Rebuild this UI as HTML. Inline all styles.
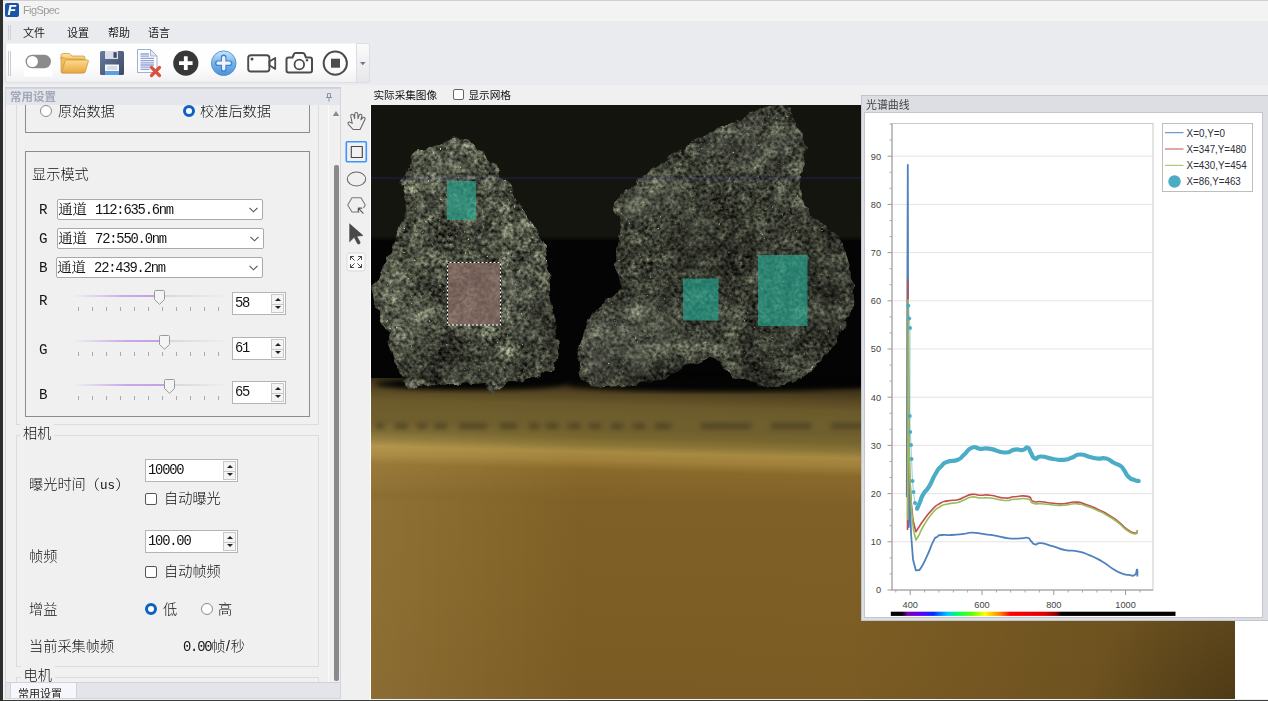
<!DOCTYPE html>
<html lang="zh-CN">
<head>
<meta charset="utf-8">
<title>FigSpec</title>
<style>
*{box-sizing:border-box;margin:0;padding:0}
html,body{width:1268px;height:701px;overflow:hidden;background:#f0f0f0}
body{position:relative;font-family:"Liberation Sans","Noto Sans CJK SC",sans-serif;font-size:11px;color:#1a1a1a}
.abs{position:absolute}
.song{font-family:"Liberation Mono","Noto Serif CJK SC",serif}
.hei{font-family:"Liberation Sans","Noto Sans CJK SC",sans-serif}
#edgeL{left:0;top:0;width:3px;height:701px;background:#2e2e2e}
#topline{left:3px;top:0;width:1265px;height:1px;background:#cfcfcf}
#titlebar{left:3px;top:1px;width:1265px;height:20px;background:#f3f3f3}
#appicon{left:5px;top:3px;width:14px;height:14px;background:#1955a6;border-radius:2px}
#apptitle{left:23px;top:3px;font-size:11px;color:#9b9b9b;line-height:14px;letter-spacing:-0.6px}
#menubar{left:3px;top:21px;width:1265px;height:64px;background:#eaebef}
.menu{top:26px;font-size:11px;line-height:14px;color:#222}
#toolbar{left:5px;top:43px;width:365px;height:40px;border-radius:3px;background:linear-gradient(#ffffff,#fdfdfd 60%,#f1f1f4);border:1px solid #dfe0e6;border-top-color:#f4f4f8}
#belowbar{left:3px;top:85px;width:1265px;height:20px;background:#f0f0f0}

#lp{left:5px;top:88px;width:336px;height:611px;background:#f0f0f0;border:1px solid #d3d5dd;overflow:hidden}
#lph{left:0;top:0;width:334px;height:16px;background:#e5e6eb}
#lpt{left:4px;top:1px;font-size:11.5px;line-height:14px;color:#a0a8b9;font-weight:bold}
.gl{border:1px solid #dcdcdc}
.gd{border:1px solid #8c8c8c}
.t14{font-size:14.2px;line-height:18px;color:#101010;white-space:nowrap;font-weight:300}
.s14{font-size:14.2px;line-height:18px;color:#141414;white-space:nowrap}
.s14 i{font-style:normal;font-size:13.800px;letter-spacing:-1.200px}
.combo{left:50.700px;width:205.500px;height:21px;background:#fff;border:1px solid #a9a9a9;border-radius:2px}
.combo .s14{left:0.500px;top:1px}
.combo svg{position:absolute;right:4px;top:7px}
.spin{background:#fff;border:1px solid #b4b4b4;height:23px}
.spin .s14{left:2px;top:1px}
.spin .btns{position:absolute;right:1px;top:1px;bottom:1px;width:13px;border:1px solid #c8c8c8;background:#f4f4f4}
.spin .btns:before{content:"";position:absolute;left:2.5px;top:3px;border:3px solid transparent;border-top:0;border-bottom:3.5px solid #222}
.spin .btns:after{content:"";position:absolute;left:2.5px;bottom:3px;border:3px solid transparent;border-bottom:0;border-top:3.5px solid #222}
.spin .btns i{position:absolute;left:0;right:0;top:9px;height:1px;background:#c8c8c8}
.radio{width:12px;height:12px;border-radius:50%;border:1px solid #8a8a8a;background:#fff}
.radio.on{border:3.5px solid #0a62c4}
.chk{width:12px;height:12px;border:1px solid #555;border-radius:2px;background:#fff}
.track{height:2px;background:linear-gradient(90deg,rgba(200,170,235,0),#c8a8ea 35%,#c3a0e8 var(--p),#d6d6d6 var(--p),rgba(217,217,217,0.1));border-radius:1px}
.ticks{height:3.500px;background:repeating-linear-gradient(90deg,#a8a8a8 0,#a8a8a8 1px,transparent 1px,transparent 14px)}
</style>
</head>
<body>
<div class="abs" id="titlebar"></div>
<div class="abs" id="topline"></div>
<div class="abs" id="menubar"></div>
<div class="abs" id="belowbar"></div>
<div class="abs" id="appicon"><span style="position:absolute;left:2.500px;top:-1px;font:italic bold 14px/16px 'Liberation Sans',sans-serif;color:#fff;letter-spacing:0">F</span></div>
<div class="abs" id="apptitle">FigSpec</div>
<div class="abs menu" style="left:23px">文件</div>
<div class="abs menu" style="left:67px">设置</div>
<div class="abs menu" style="left:108px">帮助</div>
<div class="abs menu" style="left:148px">语言</div>
<div class="abs" id="toolbar"></div>
<svg class="abs" style="left:0;top:40px" width="380" height="48" viewBox="0 40 380 48">
<defs>
<linearGradient id="gFold" x1="0" y1="0" x2="0" y2="1"><stop offset="0" stop-color="#fbdc8c"/><stop offset="1" stop-color="#eaa640"/></linearGradient>
<linearGradient id="gFoldB" x1="0" y1="0" x2="0" y2="1"><stop offset="0" stop-color="#fde79c"/><stop offset="1" stop-color="#f3c362"/></linearGradient>
<linearGradient id="gFlop" x1="0" y1="0" x2="1" y2="1"><stop offset="0" stop-color="#6a7c9c"/><stop offset="1" stop-color="#3b4964"/></linearGradient>
<linearGradient id="gBlue" x1="0" y1="0" x2="0" y2="1"><stop offset="0" stop-color="#c9e8f9"/><stop offset="0.450" stop-color="#7db9ea"/><stop offset="1" stop-color="#4a8fd9"/></linearGradient>
<linearGradient id="gOv" x1="0" y1="0" x2="0" y2="1"><stop offset="0" stop-color="#fbfbfc"/><stop offset="1" stop-color="#e6e6ea"/></linearGradient>
</defs>
<!-- toggle -->
<rect x="24" y="47" width="28.5" height="29.5" fill="#fff"/>
<rect x="25.5" y="54.8" width="25.5" height="13.4" rx="6.7" fill="#8b8b8b"/>
<circle cx="32.4" cy="61.5" r="5.5" fill="#fff"/>
<!-- folder -->
<path d="M61 55.5 q0-2 2-2 h6.5 l2.5 2.5 h11 q2 0 2 2 v2 h-24z" fill="url(#gFoldB)" stroke="#c98d3e" stroke-width="0.700"/>
<path d="M61 57 v14.5 q0 1.5 1.5 1.5 h20 l-0.5 -14 h-15 z" fill="#f1bd5c" stroke="#c98d3e" stroke-width="0.600"/>
<path d="M66.5 60 h21 q1.2 0 0.9 1.2 l-3.2 10.8 q-0.3 1 -1.4 1 h-21.3 q-1.2 0 -0.8 -1.1 l3.4 -10.9 q0.3-1 1.4-1z" fill="url(#gFold)" stroke="#c98d3e" stroke-width="0.700"/>
<!-- floppy -->
<path d="M101.5 51 h21 q1.5 0 1.5 1.5 v21 q0 1.5 -1.5 1.5 h-21 q-1.5 0 -1.5 -1.5 v-21 q0 -1.500 1.500 -1.500z" fill="url(#gFlop)"/>
<rect x="105" y="51" width="13" height="8" fill="#d9deea"/>
<rect x="113.500" y="52.200" width="3.200" height="5.600" fill="#3b4964"/>
<rect x="105" y="64.500" width="14" height="10.500" fill="#f4f6fa"/>
<rect x="105" y="71" width="14" height="4" fill="#5b9fe0"/>
<rect x="107" y="66.500" width="10" height="1" fill="#b9c2d4"/><rect x="107" y="68.500" width="10" height="1" fill="#b9c2d4"/>
<!-- doc -->
<path d="M137.5 49.500 h13 l6.500 6.500 v16.500 h-19.500z" fill="#fcfdff" stroke="#9aa6cc" stroke-width="0.9"/>
<path d="M150.500 49.500 v6.500 h6.500z" fill="#e4e9f6" stroke="#9aa6cc" stroke-width="0.8"/>
<g stroke="#93a2d2" stroke-width="1.300"><path d="M140.500 54h8.500M140.500 56.200h8.500M140.500 58.400h13.500M140.500 60.600h13.500M140.500 62.800h13.500M140.500 65h13.500M140.500 67.200h10M140.500 69.400h9"/></g>
<path d="M151.500 67.500 l8 8 M159.500 67.500 l-8 8" stroke="#d9503f" stroke-width="3.200" stroke-linecap="round"/>
<!-- black plus -->
<circle cx="185.800" cy="63.100" r="12.600" fill="#383838"/>
<path d="M185.800 56.300v13.600M179 63.100h13.600" stroke="#fff" stroke-width="3.800"/>
<!-- blue plus -->
<circle cx="223.700" cy="63.200" r="12.300" fill="url(#gBlue)" stroke="#4f8cd2" stroke-width="0.900"/>
<path d="M223.700 57.300v11.800M217.800 63.200h11.800" stroke="#3f7fcb" stroke-width="5.600" stroke-linecap="round"/>
<path d="M223.700 57.600v11.200M218.100 63.200h11.200" stroke="#eef4fd" stroke-width="3.300" stroke-linecap="round"/>
<!-- video -->
<rect x="248.200" y="55.300" width="21.200" height="16.200" rx="2.800" fill="none" stroke="#4c4c4c" stroke-width="1.900"/>
<path d="M269.400 61.500 l5.800 -3.600 v11 l-5.800 -3.600z" fill="none" stroke="#4c4c4c" stroke-width="1.800" stroke-linejoin="round"/>
<circle cx="252" cy="59" r="1.500" fill="#4c4c4c"/>
<!-- camera -->
<path d="M288.500 57.500 h4 l1.500 -3.500 q0.400 -1 1.500 -1 h7.500 q1.100 0 1.500 1 l1.500 3.500 h4 q2 0 2 2 v11 q0 2 -2 2 h-21.500 q-2 0 -2 -2 v-11 q0 -2 2 -2z" fill="none" stroke="#4c4c4c" stroke-width="2" stroke-linejoin="round"/>
<circle cx="299.300" cy="64.500" r="4.800" fill="none" stroke="#4c4c4c" stroke-width="1.800"/>
<circle cx="307" cy="60.200" r="1.200" fill="#4c4c4c"/>
<!-- stop -->
<circle cx="335.300" cy="63.200" r="11.600" fill="none" stroke="#4c4c4c" stroke-width="2"/>
<rect x="331" y="58.700" width="9" height="9" fill="#4c4c4c"/>
<!-- overflow -->
<path d="M356.500 43.500 h10.500 q2.500 0 2.500 2.500 v34 q0 2.500 -2.500 2.500 h-10.500z" fill="url(#gOv)" stroke="#dcdde3" stroke-width="1"/>
<path d="M360 62 h5.600 l-2.800 3.200z" fill="#6a7a92"/>
<!-- grips -->
<g stroke="#c9cad2" stroke-width="1"><path d="M8.500 51v25M10.500 51v25"/></g>
</svg>
<svg class="abs" style="left:3px;top:21px" width="12" height="23"><g stroke="#cfd1d9" stroke-width="1"><path d="M5.500 4v15M7.500 4v15"/></g></svg>

<div class="abs" style="left:5px;top:87px;width:336px;height:1.500px;background:#cdced6"></div>
<div class="abs" id="lp">
<div class="abs gl" style="left:10px;top:-5px;width:303px;height:341px"></div>
<div class="abs gd" style="left:18.500px;top:-5px;width:285.500px;height:48.500px"></div>
<div class="abs radio" style="left:34px;top:15.500px"></div>
<div class="abs t14" style="left:52px;top:13px">原始数据</div>
<div class="abs radio on" style="left:177px;top:15.500px"></div>
<div class="abs t14" style="left:194px;top:13px">校准后数据</div>
<div class="abs gd" style="left:18.500px;top:61.500px;width:285.500px;height:266.500px"></div>
<div class="abs t14" style="left:26px;top:76px">显示模式</div>
<div class="abs s14 song" style="left:33px;top:112px">R</div>
<div class="abs combo" style="top:110.100px;width:206px"><div class="abs s14 song">通道 <i>112:635.6nm</i></div><svg width="9" height="6"><path d="M0.500 0.800l4 4l4-4" fill="none" stroke="#555" stroke-width="1.100"/></svg></div>
<div class="abs s14 song" style="left:33px;top:141px">G</div>
<div class="abs combo" style="top:139.100px;width:207.500px"><div class="abs s14 song">通道 <i>72:550.0nm</i></div><svg width="9" height="6"><path d="M0.500 0.800l4 4l4-4" fill="none" stroke="#555" stroke-width="1.100"/></svg></div>
<div class="abs s14 song" style="left:33px;top:170px">B</div>
<div class="abs combo" style="top:167.800px;left:49.700px;width:207px"><div class="abs s14 song">通道 <i>22:439.2nm</i></div><svg width="9" height="6"><path d="M0.500 0.800l4 4l4-4" fill="none" stroke="#555" stroke-width="1.100"/></svg></div>
<div class="abs s14 song" style="left:33px;top:203px">R</div>
<div class="abs track" style="left:67px;top:205.7px;width:152px;--p:57%"></div>
<svg class="abs" style="left:147px;top:199.7px" width="13" height="17"><path d="M2.500 1.500 h8 q1 0 1 1 v8 l-5 4.800 l-5 -4.800 v-8 q0 -1 1 -1z" fill="#f4f4f4" stroke="#9a9a9a" stroke-width="1"/></svg>
<div class="abs ticks" style="left:72px;top:218.2px;width:141px"></div>
<div class="abs spin" style="left:226px;top:202.7px;width:54px"><div class="abs s14 song"><i>58</i></div><div class="btns"><i></i></div></div>
<div class="abs s14 song" style="left:33px;top:251.500px">G</div>
<div class="abs track" style="left:67px;top:250.60000000000002px;width:152px;--p:60%"></div>
<svg class="abs" style="left:152px;top:244.60000000000002px" width="13" height="17"><path d="M2.500 1.500 h8 q1 0 1 1 v8 l-5 4.800 l-5 -4.800 v-8 q0 -1 1 -1z" fill="#f4f4f4" stroke="#9a9a9a" stroke-width="1"/></svg>
<div class="abs ticks" style="left:72px;top:263.1px;width:141px"></div>
<div class="abs spin" style="left:226px;top:247.60000000000002px;width:54px"><div class="abs s14 song"><i>61</i></div><div class="btns"><i></i></div></div>
<div class="abs s14 song" style="left:33px;top:297px">B</div>
<div class="abs track" style="left:67px;top:294.7px;width:152px;--p:63%"></div>
<svg class="abs" style="left:156.7px;top:288.7px" width="13" height="17"><path d="M2.500 1.500 h8 q1 0 1 1 v8 l-5 4.800 l-5 -4.800 v-8 q0 -1 1 -1z" fill="#f4f4f4" stroke="#9a9a9a" stroke-width="1"/></svg>
<div class="abs ticks" style="left:72px;top:307.2px;width:141px"></div>
<div class="abs spin" style="left:226px;top:291.7px;width:54px"><div class="abs s14 song"><i>65</i></div><div class="btns"><i></i></div></div>
<div class="abs gl" style="left:10px;top:346px;width:303px;height:232px"></div>
<div class="abs t14" style="left:14px;top:335px;background:#f0f0f0;padding:0 3px">相机</div>
<div class="abs t14" style="left:23px;top:385.500px">曝光时间<span class="song" style="font-size:14.2px">（<i style="font-style:normal;font-size:12.5px">us</i>）</span></div>
<div class="abs spin" style="left:139px;top:369.800px;width:93px"><div class="abs s14 song"><i>10000</i></div><div class="btns"><i></i></div></div>
<div class="abs chk" style="left:139px;top:403.500px"></div>
<div class="abs t14" style="left:158px;top:400px">自动曝光</div>
<div class="abs t14" style="left:23px;top:457.500px">帧频</div>
<div class="abs spin" style="left:139px;top:440.800px;width:93px"><div class="abs s14 song"><i>100.00</i></div><div class="btns"><i></i></div></div>
<div class="abs chk" style="left:139px;top:476.500px"></div>
<div class="abs t14" style="left:158px;top:473px">自动帧频</div>
<div class="abs t14" style="left:23px;top:511px">增益</div>
<div class="abs radio on" style="left:139px;top:514px"></div>
<div class="abs t14" style="left:157px;top:511px">低</div>
<div class="abs radio" style="left:195px;top:514px"></div>
<div class="abs t14" style="left:212px;top:511px">高</div>
<div class="abs t14" style="left:23px;top:547.500px">当前采集帧频</div>
<div class="abs s14 song" style="left:177px;top:548px"><i>0.00</i><span class="hei" style="font-size:14.2px;letter-spacing:0.600px;font-weight:300">帧/秒</span></div>
<div class="abs gl" style="left:10px;top:588px;width:303px;height:60px"></div>
<div class="abs t14" style="left:14.500px;top:577px;background:#f0f0f0;padding:0 3px">电机</div>
<!-- scrollbar -->
<svg class="abs" style="left:322px;top:16px" width="13" height="578"><path d="M0.500 0v578" stroke="#fafafa" stroke-width="1"/><path d="M4.800 11 l3.200 -5 l3.200 5z" fill="#8a8a8a"/><rect x="6" y="60" width="5" height="516" rx="2" fill="#8a8a8a"/></svg>
<div class="abs" id="lph"><div class="abs" id="lpt">常用设置</div>
<svg class="abs" style="left:319px;top:4px" width="8" height="9"><path d="M2.500 0.500h3v4h-3zM1 4.500h6M4 4.500v4" fill="none" stroke="#8791a8" stroke-width="1"/></svg></div>
<div class="abs" style="left:0;top:593px;width:334px;height:17px;background:#e4e5ea;border-top:1px solid #d0d2da"></div>
<div class="abs" style="left:4px;top:593px;width:67px;height:17px;background:#f6f6fb;border:1px solid #d0d2da;border-bottom:0"></div>
<div class="abs" style="left:12px;top:598px;font-size:11px;line-height:14px;color:#222">常用设置</div>
</div>

<div class="abs" style="left:373.500px;top:88px;font-size:10.700px;line-height:14px;color:#111;letter-spacing:-0.100px">实际采集图像</div>
<div class="abs" style="left:453px;top:88.500px;width:11px;height:11px;border:1px solid #666;border-radius:2px;background:#fff"></div>
<div class="abs" style="left:468.500px;top:88px;font-size:10.700px;line-height:14px;color:#111;letter-spacing:-0.100px">显示网格</div>
<svg class="abs" style="left:342px;top:108px" width="28" height="170" viewBox="342 108 28 170" fill="none" stroke="#666" stroke-width="1.050" stroke-linejoin="round" stroke-linecap="round">
<!-- hand -->
<path d="M353.100 129.500 L348.600 124.600 Q347.300 123 348.500 122.200 Q349.600 121.600 350.800 122.600 L352.200 123.400 L350.800 116.300 Q350.600 114.400 351.900 114.200 Q353.300 114 353.800 115.600 L354.700 118.600 L354.700 114 Q354.900 112.500 356.300 112.500 Q357.700 112.500 357.800 114.100 L358 118.600 L359.200 115.200 Q359.800 113.900 361 114.300 Q362.200 114.800 361.800 116.200 L360.900 119.800 L362.800 117.600 Q363.900 116.800 364.700 117.600 Q365.400 118.400 364.900 119.600 L360.100 129.400 Z"/>
<!-- rect selected -->
<rect x="346.300" y="141.800" width="20" height="20" rx="1" stroke="#3d94ff" stroke-width="1.600"/>
<rect x="351.300" y="146.500" width="11" height="11" stroke="#444" stroke-width="1.100"/>
<!-- ellipse -->
<ellipse cx="356.500" cy="179" rx="9.200" ry="7"/>
<!-- polygon -->
<path d="M359 212 h-7 l-4.300 -7 l4.300 -7.300 h9 l4.300 7.300 l-1.600 2.600" stroke="#777"/>
<path d="M358.300 208.200 h3.400 M358.300 208.200 v3.400 M358.300 208.200 l4.700 5" stroke="#555" stroke-width="1.200"/>
<!-- arrow -->
<path d="M349.800 224 l13.200 11.600 l-6.200 0.600 l3.200 5.800 q0.600 1.300 -0.700 1.900 q-1.300 0.600 -2 -0.700 l-3.100 -5.900 l-4.400 4.300z" fill="#484848" stroke="#484848" stroke-width="0.600"/>
<!-- expand -->
<rect x="347" y="253" width="18" height="18" rx="2.500" fill="#fafafa" stroke="#d9d9d9" stroke-width="1"/>
<g stroke="#4a4a4a" stroke-width="1"><path d="M350.500 256.500v3M350.500 256.500h3M350.500 256.500l3.800 3.800 M361.500 256.500v3M361.500 256.500h-3M361.500 256.500l-3.800 3.800 M350.500 267.500v-3M350.500 267.500h3M350.500 267.500l3.800 -3.800 M361.500 267.500v-3M361.500 267.500h-3M361.500 267.500l-3.800 -3.800"/></g>
</svg>

<svg class="abs" style="left:371px;top:105px" width="864" height="594" viewBox="0 0 864 594">
<defs>
<linearGradient id="gFloor" gradientUnits="userSpaceOnUse" x1="229" y1="273" x2="221" y2="594"><stop offset="0.0000" stop-color="#040404"/><stop offset="0.0187" stop-color="#3a3018"/><stop offset="0.0530" stop-color="#584823"/><stop offset="0.0841" stop-color="#6a592a"/><stop offset="0.1153" stop-color="#6e5e2e"/><stop offset="0.1558" stop-color="#705f2e"/><stop offset="0.1838" stop-color="#78662f"/><stop offset="0.2087" stop-color="#8b7637"/><stop offset="0.2305" stop-color="#a88a42"/><stop offset="0.2555" stop-color="#a0803a"/><stop offset="0.2866" stop-color="#8a6a2a"/><stop offset="0.3333" stop-color="#85652a"/><stop offset="0.3801" stop-color="#7f6026"/><stop offset="0.6916" stop-color="#7d5e24"/><stop offset="1.0000" stop-color="#7a5b23"/></linearGradient>
<linearGradient id="gBg" gradientUnits="userSpaceOnUse" x1="0" y1="0" x2="0" y2="280"><stop offset="0" stop-color="#12140d"/><stop offset="0.468" stop-color="#13150e"/><stop offset="0.486" stop-color="#040405"/><stop offset="1" stop-color="#040404"/></linearGradient>
<radialGradient id="gCorner" gradientUnits="userSpaceOnUse" cx="880" cy="620" r="165"><stop offset="0" stop-color="#000" stop-opacity="0.290"/><stop offset="1" stop-color="#000" stop-opacity="0"/></radialGradient>
<linearGradient id="gFloorX" x1="0" y1="0" x2="1" y2="0"><stop offset="0" stop-color="#000" stop-opacity="0"/><stop offset="0.550" stop-color="#000" stop-opacity="0"/><stop offset="1" stop-color="#000" stop-opacity="0.170"/></linearGradient><linearGradient id="gV" gradientUnits="userSpaceOnUse" x1="0" y1="314" x2="0" y2="340"><stop offset="0" stop-color="#000"/><stop offset="1" stop-color="#fff"/></linearGradient><mask id="mFL" maskUnits="userSpaceOnUse" x="0" y="300" width="864" height="300"><rect x="0" y="300" width="864" height="300" fill="url(#gV)"/></mask><linearGradient id="gFloorL" x1="0" y1="0" x2="1" y2="0"><stop offset="0" stop-color="#ffe9a0" stop-opacity="0.130"/><stop offset="0.250" stop-color="#ffe9a0" stop-opacity="0"/><stop offset="1" stop-color="#ffe9a0" stop-opacity="0"/></linearGradient>
<filter id="fRock" x="0" y="0" width="100%" height="100%" color-interpolation-filters="sRGB">
<feTurbulence type="fractalNoise" baseFrequency="0.280" numOctaves="2" seed="7" result="n"/>
<feColorMatrix in="n" type="matrix" values="1 0 0 0 0  1 0 0 0 0  1 0 0 0 0  0 0 0 0 1" result="fine"/>
<feTurbulence type="fractalNoise" baseFrequency="0.035" numOctaves="3" seed="11" result="n2"/>
<feColorMatrix in="n2" type="matrix" values="0.700 0 0 0 0  0.700 0 0 0 0  0.700 0 0 0 0  0 0 0 0 1" result="coarse"/>
<feComposite in="fine" in2="coarse" operator="arithmetic" k1="0" k2="0.580" k3="0.450" k4="-0.180" result="tex0"/>
<feColorMatrix in="tex0" type="matrix" values="0.990 0 0 0 0  0 1.035 0 0 0  0 0 0.860 0 0  0 0 0 0 1" result="tex"/>
<feTurbulence type="turbulence" baseFrequency="0.055" numOctaves="2" seed="23" result="n3"/>
<feColorMatrix in="n3" type="matrix" values="1 0 0 0 0  1 0 0 0 0  1 0 0 0 0  0 0 0 0 1" result="vein"/>
<feComposite in="tex" in2="vein" operator="arithmetic" k1="1.050" k2="0.690" k3="0" k4="0" result="tex2"/>
<feColorMatrix in="n" type="matrix" values="0 0 0 0 0.850  0 0 0 0 0.850  0 0 0 0 0.750  0 7 0 0 -5.250" result="sp"/>
<feMerge result="m"><feMergeNode in="tex2"/><feMergeNode in="sp"/></feMerge>
<feComposite in="m" in2="SourceGraphic" operator="in"/>
</filter>
<filter id="fBlur" color-interpolation-filters="sRGB"><feGaussianBlur stdDeviation="2.500"/></filter>
<filter id="fJag" x="-5%" y="-5%" width="110%" height="110%"><feTurbulence type="fractalNoise" baseFrequency="0.090" numOctaves="2" seed="5" result="t"/><feDisplacementMap in="SourceGraphic" in2="t" scale="9" xChannelSelector="R" yChannelSelector="G"/></filter>
<filter id="fBlurB" color-interpolation-filters="sRGB" x="-50%" y="-50%" width="200%" height="200%"><feGaussianBlur stdDeviation="9"/></filter>
<filter id="fBlur1" color-interpolation-filters="sRGB"><feGaussianBlur stdDeviation="0.750"/></filter>
</defs>
<rect width="864" height="594" fill="url(#gBg)"/>
<!-- floor -->
<rect x="0" y="273" width="864" height="321" fill="url(#gFloor)"/>
<rect x="0" y="273" width="864" height="321" fill="url(#gFloorX)"/>
<rect x="0" y="312" width="864" height="282" fill="url(#gFloorL)" mask="url(#mFL)"/>
<rect x="0" y="273" width="864" height="321" fill="url(#gCorner)"/>
<g filter="url(#fBlur)"><path d="M5 321h8M24 321h13M46 321h10M63 321h13M88 321h28M129 321h17M158 321h10M175 321h12M197 321h12M218 321h12M240 321h12M262 321h12M284 321h16M330 321h50M400 321h40M460 321h60M545 321h55M620 321h70M710 321h60M790 321h70" stroke="#3e3820" stroke-width="5" stroke-opacity="0.700"/>
<path d="M-5 390h880" stroke="#8a672a" stroke-width="3" stroke-opacity="0.500"/></g>
<!-- shadow under rocks -->
<g filter="url(#fBlur)"><ellipse cx="100" cy="279" rx="95" ry="6" fill="#040404"/><ellipse cx="345" cy="280" rx="150" ry="6.500" fill="#040404"/><ellipse cx="160" cy="272" rx="60" ry="8" fill="#040404"/></g>
<!-- rocks -->
<mask id="mL" maskUnits="userSpaceOnUse" x="0" y="0" width="864" height="594"><polygon points="87,34 74,36 59,43 42,48 37,60 31,76 34,91 35,106 29,123 25,136 15,157 5,175 2,187 3,196 9,213 16,226 21,245 25,260 31,275 38,282 69,281 99,279 115,278 119,285 123,288 131,283 140,277 159,273 183,265 187,250 187,235 184,215 179,196 177,165 174,141 164,123 153,106 143,89 132,72 121,58 110,46 97,36" fill="#fff" filter="url(#fJag)"/></mask>
<mask id="mR" maskUnits="userSpaceOnUse" x="0" y="0" width="864" height="594"><polygon points="399,0 386,5 373,12 349,23 322,36 301,50 283,63 267,76 253,87 243,98 242,104 247,113 249,123 245,145 245,166 249,177 253,183 237,195 223,205 214,225 208,243 207,260 210,273 219,280 232,282 254,281 275,278 293,272 309,265 327,257 343,252 351,261 360,269 381,277 403,282 421,278 437,269 451,255 463,239 474,220 482,201 483,183 480,166 475,148 467,132 453,119 437,111 432,95 429,81 433,60 435,42 429,25 422,12 416,0" fill="#fff" filter="url(#fJag)"/></mask>
<g filter="url(#fBlur1)">
<g mask="url(#mL)"><rect x="0" y="30" width="195" height="265" fill="#444" filter="url(#fRock)"/><g filter="url(#fBlurB)"><ellipse cx="69" cy="260" rx="60" ry="22" fill="#000" fill-opacity="0.3"/><ellipse cx="174" cy="225" rx="14" ry="50" fill="#000" fill-opacity="0.28"/><ellipse cx="79" cy="65" rx="30" ry="18" fill="#cfd3c8" fill-opacity="0.1"/><ellipse cx="29" cy="205" rx="22" ry="30" fill="#cfd3c8" fill-opacity="0.1"/><ellipse cx="149" cy="195" rx="22" ry="40" fill="#cfd3c8" fill-opacity="0.06"/></g></g>
<g mask="url(#mR)"><rect x="200" y="0" width="290" height="290" fill="#444" filter="url(#fRock)"/><g filter="url(#fBlurB)"><rect x="200" y="0" width="290" height="290" fill="#000" fill-opacity="0.170"/><ellipse cx="341" cy="145" rx="48" ry="30" fill="#000" fill-opacity="0.3"/><ellipse cx="461" cy="190" rx="24" ry="68" fill="#000" fill-opacity="0.22"/><ellipse cx="261" cy="230" rx="45" ry="35" fill="#cfd3c8" fill-opacity="0.1" transform="rotate(-30 261 230)"/><ellipse cx="277" cy="95" rx="32" ry="16" fill="#cfd3c8" fill-opacity="0.12" transform="rotate(-35 277 95)"/><ellipse cx="379" cy="40" rx="50" ry="30" fill="#cfd3c8" fill-opacity="0.06"/><ellipse cx="329" cy="275" rx="120" ry="9" fill="#000" fill-opacity="0.35"/><ellipse cx="399" cy="225" rx="40" ry="30" fill="#000" fill-opacity="0.08"/><ellipse cx="229" cy="245" rx="18" ry="30" fill="#d8dccf" fill-opacity="0.08"/></g></g>
</g>
<!-- blue line -->
<rect x="0" y="72.500" width="864" height="1" fill="#0e0e44" style="mix-blend-mode:screen"/>
<!-- overlays -->
<rect x="76" y="76" width="29" height="39" fill="#27a991" fill-opacity="0.660"/>
<rect x="312" y="173.500" width="35.500" height="42" fill="#27a991" fill-opacity="0.660"/>
<rect x="387" y="150" width="49.500" height="71" fill="#27a991" fill-opacity="0.660"/>
<rect x="76.500" y="157.500" width="53" height="62.500" fill="#8a6e67" fill-opacity="0.720"/>
<rect x="76.500" y="157.500" width="53" height="62.500" fill="none" stroke="#fff" stroke-width="1"/>
<rect x="76.500" y="157.500" width="53" height="62.500" fill="none" stroke="#000" stroke-width="1" stroke-dasharray="2 2"/>
</svg>
<div class="abs" style="left:1235px;top:105px;width:33px;height:594px;background:#fff"></div>
<div class="abs" style="left:370.200px;top:105px;width:1.200px;height:594.600px;background:#fff"></div>
<div class="abs" style="left:3px;top:699.600px;width:1265px;height:1.400px;background:#3a3c3c"></div>

<div class="abs" style="left:861px;top:95px;width:410px;height:526px;background:#dddee3;border:1px solid #c3c5cd"></div>
<div class="abs" style="left:866px;top:98px;font-size:10.900px;line-height:14px;color:#444">光谱曲线</div>
<svg class="abs" style="left:861px;top:95px" width="407" height="526" viewBox="861 95 407 526" font-family="'Liberation Sans',sans-serif" font-size="9.200" fill="#444">
<defs><linearGradient id="gSpec" x1="0" y1="0" x2="1" y2="0">
<stop offset="0" stop-color="#000"/><stop offset="0.041" stop-color="#000"/><stop offset="0.058" stop-color="#7a00a8"/><stop offset="0.110" stop-color="#5a00ff"/><stop offset="0.150" stop-color="#0030ff"/><stop offset="0.200" stop-color="#00c8ff"/><stop offset="0.235" stop-color="#00ff60"/><stop offset="0.285" stop-color="#60ff00"/><stop offset="0.330" stop-color="#ffff00"/><stop offset="0.385" stop-color="#ff8000"/><stop offset="0.420" stop-color="#ff0000"/><stop offset="0.540" stop-color="#e00000"/><stop offset="0.580" stop-color="#900000"/><stop offset="0.600" stop-color="#000"/><stop offset="1" stop-color="#000"/>
</linearGradient></defs>
<rect x="864.500" y="112.500" width="398" height="505" fill="#fff" stroke="#c4c6cf"/>
<rect x="892" y="123.500" width="261" height="466.500" fill="#fff" stroke="#c9c9c9" stroke-width="1"/>
<path d="M892 541.8H1153" stroke="#e3e3e3" stroke-width="1"/><path d="M892 493.6H1153" stroke="#e3e3e3" stroke-width="1"/><path d="M892 445.4H1153" stroke="#e3e3e3" stroke-width="1"/><path d="M892 397.2H1153" stroke="#e3e3e3" stroke-width="1"/><path d="M892 349.0H1153" stroke="#e3e3e3" stroke-width="1"/><path d="M892 300.8H1153" stroke="#e3e3e3" stroke-width="1"/><path d="M892 252.6H1153" stroke="#e3e3e3" stroke-width="1"/><path d="M892 204.4H1153" stroke="#e3e3e3" stroke-width="1"/><path d="M892 156.2H1153" stroke="#e3e3e3" stroke-width="1"/>


<text x="881" y="593.4" text-anchor="end">0</text><path d="M887.500 590.0h4.500" stroke="#999" stroke-width="1"/><path d="M889.500 573.9h2.500" stroke="#aaa" stroke-width="1"/><path d="M889.500 557.9h2.500" stroke="#aaa" stroke-width="1"/><text x="881" y="545.2" text-anchor="end">10</text><path d="M887.500 541.8h4.500" stroke="#999" stroke-width="1"/><path d="M889.500 525.7h2.500" stroke="#aaa" stroke-width="1"/><path d="M889.500 509.7h2.500" stroke="#aaa" stroke-width="1"/><text x="881" y="497.0" text-anchor="end">20</text><path d="M887.500 493.6h4.500" stroke="#999" stroke-width="1"/><path d="M889.500 477.5h2.500" stroke="#aaa" stroke-width="1"/><path d="M889.500 461.5h2.500" stroke="#aaa" stroke-width="1"/><text x="881" y="448.8" text-anchor="end">30</text><path d="M887.500 445.4h4.500" stroke="#999" stroke-width="1"/><path d="M889.500 429.3h2.500" stroke="#aaa" stroke-width="1"/><path d="M889.500 413.3h2.500" stroke="#aaa" stroke-width="1"/><text x="881" y="400.6" text-anchor="end">40</text><path d="M887.500 397.2h4.500" stroke="#999" stroke-width="1"/><path d="M889.500 381.1h2.500" stroke="#aaa" stroke-width="1"/><path d="M889.500 365.1h2.500" stroke="#aaa" stroke-width="1"/><text x="881" y="352.4" text-anchor="end">50</text><path d="M887.500 349.0h4.500" stroke="#999" stroke-width="1"/><path d="M889.500 332.9h2.500" stroke="#aaa" stroke-width="1"/><path d="M889.500 316.9h2.500" stroke="#aaa" stroke-width="1"/><text x="881" y="304.2" text-anchor="end">60</text><path d="M887.500 300.8h4.500" stroke="#999" stroke-width="1"/><path d="M889.500 284.7h2.500" stroke="#aaa" stroke-width="1"/><path d="M889.500 268.7h2.500" stroke="#aaa" stroke-width="1"/><text x="881" y="256.0" text-anchor="end">70</text><path d="M887.500 252.6h4.500" stroke="#999" stroke-width="1"/><path d="M889.500 236.5h2.500" stroke="#aaa" stroke-width="1"/><path d="M889.500 220.5h2.500" stroke="#aaa" stroke-width="1"/><text x="881" y="207.8" text-anchor="end">80</text><path d="M887.500 204.4h4.500" stroke="#999" stroke-width="1"/><path d="M889.500 188.3h2.500" stroke="#aaa" stroke-width="1"/><path d="M889.500 172.3h2.500" stroke="#aaa" stroke-width="1"/><text x="881" y="159.6" text-anchor="end">90</text><path d="M887.500 156.2h4.500" stroke="#999" stroke-width="1"/><path d="M889.500 140.1h2.500" stroke="#aaa" stroke-width="1"/><path d="M889.500 124.1h2.500" stroke="#aaa" stroke-width="1"/><path d="M895.8 590v2.500" stroke="#aaa" stroke-width="1"/><path d="M910.2 590v5" stroke="#999" stroke-width="1"/><text x="910.2" y="607.600" text-anchor="middle">400</text><path d="M924.6 590v2.500" stroke="#aaa" stroke-width="1"/><path d="M938.9 590v2.500" stroke="#aaa" stroke-width="1"/><path d="M953.3 590v2.500" stroke="#aaa" stroke-width="1"/><path d="M967.6 590v2.500" stroke="#aaa" stroke-width="1"/><path d="M982.0 590v5" stroke="#999" stroke-width="1"/><text x="982.0" y="607.600" text-anchor="middle">600</text><path d="M996.4 590v2.500" stroke="#aaa" stroke-width="1"/><path d="M1010.7 590v2.500" stroke="#aaa" stroke-width="1"/><path d="M1025.1 590v2.500" stroke="#aaa" stroke-width="1"/><path d="M1039.4 590v2.500" stroke="#aaa" stroke-width="1"/><path d="M1053.8 590v5" stroke="#999" stroke-width="1"/><text x="1053.8" y="607.600" text-anchor="middle">800</text><path d="M1068.2 590v2.500" stroke="#aaa" stroke-width="1"/><path d="M1082.5 590v2.500" stroke="#aaa" stroke-width="1"/><path d="M1096.9 590v2.500" stroke="#aaa" stroke-width="1"/><path d="M1111.2 590v2.500" stroke="#aaa" stroke-width="1"/><path d="M1125.6 590v5" stroke="#999" stroke-width="1"/><text x="1125.6" y="607.600" text-anchor="middle">1000</text><path d="M1140.0 590v2.500" stroke="#aaa" stroke-width="1"/><path d="M892 123.500V590H1153" fill="none" stroke="#9c9c9c" stroke-width="1"/>
<path d="M906.8 497.0 L907.3 300.0 L907.8 165.0 L908.3 400.0 L908.8 527.0 L909.5 480.0 L911.0 533.0 L913.0 559.4 L915.9 570.4L915.9 570.4C916.6 570.3 916.2 570.9 918.0 570.0C919.8 569.1 918.1 572.5 921.2 567.6C924.3 562.7 923.2 564.2 927.3 555.4C931.4 546.6 930.2 547.2 933.4 541.1C936.6 535.0 934.3 539.0 937.0 537.0C939.7 535.0 936.6 535.7 941.5 535.0C946.4 534.3 944.2 535.4 951.7 535.0C959.2 534.6 957.1 534.6 963.9 533.8C970.7 533.0 965.2 532.5 972.0 532.6C978.8 532.7 976.1 533.1 984.2 534.2C992.3 535.3 988.3 534.4 996.4 535.8C1004.5 537.2 1000.5 537.5 1008.6 538.3C1016.7 539.1 1014.4 538.4 1020.8 538.3C1027.2 538.2 1024.3 537.0 1027.7 537.9C1031.1 538.8 1028.6 538.8 1031.0 541.0C1033.4 543.2 1031.6 543.7 1035.0 544.4C1038.4 545.1 1035.0 542.5 1041.1 543.2C1047.2 543.9 1045.2 544.1 1053.3 546.4C1061.4 548.7 1057.4 548.5 1065.5 550.1C1073.6 551.7 1069.6 549.5 1077.7 551.3C1085.8 553.1 1081.8 552.0 1089.9 555.4C1098.0 558.8 1094.6 557.2 1102.1 561.5C1109.6 565.8 1106.2 564.6 1112.3 568.4C1118.4 572.2 1115.0 570.7 1120.4 572.9C1125.8 575.1 1123.8 574.2 1128.6 574.9C1133.4 575.6 1131.9 576.7 1134.7 574.9C1137.5 573.1 1136.2 569.1 1137.1 569.6C1138.0 570.1 1137.2 574.2 1137.3 576.5" fill="none" stroke="#4f81bd" stroke-width="1.800" stroke-linejoin="round"/>
<path d="M907.5 530.0 L907.8 280.0 L908.6 420.0 L909.5 470.0 L911.0 500.0 L913.0 520.0 L915.9 531.8L915.9 531.8C916.9 530.2 916.6 530.7 919.0 527.0C921.4 523.3 919.1 526.3 923.2 520.8C927.3 515.3 925.9 516.3 931.3 510.6C936.7 504.9 934.1 506.9 939.5 503.7C944.9 500.5 941.5 502.2 947.6 500.9C953.7 499.6 952.4 500.9 957.8 499.7C963.2 498.5 959.2 499.0 963.9 497.2C968.6 495.4 966.6 495.1 972.0 494.4C977.4 493.7 974.0 494.9 980.1 495.2C986.2 495.5 982.2 494.3 990.3 495.2C998.4 496.1 996.4 497.5 1004.5 498.0C1012.6 498.5 1007.0 497.3 1014.7 496.8C1022.4 496.3 1021.6 494.9 1027.7 496.4C1033.8 497.9 1028.5 499.5 1033.0 501.3C1037.5 503.1 1034.3 501.0 1041.1 501.7C1047.9 502.4 1045.8 502.6 1053.3 503.3C1060.8 504.0 1056.0 504.1 1063.5 503.7C1071.0 503.3 1068.2 501.8 1075.7 502.1C1083.2 502.4 1078.4 502.1 1085.9 504.5C1093.4 506.9 1090.7 506.0 1098.1 509.4C1105.5 512.8 1101.4 510.6 1108.2 514.7C1115.0 518.8 1112.3 516.9 1118.4 521.6C1124.5 526.3 1121.1 525.1 1126.5 528.9C1131.9 532.7 1131.0 532.6 1134.7 533.0C1138.4 533.4 1136.6 531.1 1137.5 530.2" fill="none" stroke="#c0504d" stroke-width="1.600" stroke-linejoin="round"/>
<path d="M907.7 520.0 L908.2 300.0 L909.0 440.0 L910.0 480.0 L911.5 510.0 L913.5 530.0 L915.9 540.0L915.9 540.0C916.9 538.3 916.6 539.5 919.0 535.0C921.4 530.5 919.1 533.3 923.2 526.5C927.3 519.7 925.9 521.0 931.3 514.5C936.7 508.0 934.1 510.5 939.5 507.0C944.9 503.5 941.5 505.5 947.6 504.0C953.7 502.5 952.4 503.8 957.8 502.5C963.2 501.2 959.2 501.8 963.9 500.0C968.6 498.2 966.6 497.7 972.0 497.0C977.4 496.3 974.0 497.7 980.1 498.0C986.2 498.3 982.2 497.2 990.3 498.0C998.4 498.8 996.4 500.1 1004.5 500.5C1012.6 500.9 1007.0 499.8 1014.7 499.3C1022.4 498.8 1021.6 497.7 1027.7 499.0C1033.8 500.3 1028.5 501.7 1033.0 503.3C1037.5 504.9 1034.3 503.1 1041.1 503.7C1047.9 504.3 1045.8 504.5 1053.3 505.0C1060.8 505.5 1056.0 505.7 1063.5 505.3C1071.0 504.9 1068.2 503.6 1075.7 503.8C1083.2 504.0 1078.4 503.7 1085.9 506.0C1093.4 508.3 1090.7 507.5 1098.1 510.8C1105.5 514.1 1101.4 512.0 1108.2 516.0C1115.0 520.0 1112.3 518.1 1118.4 522.8C1124.5 527.5 1121.1 526.3 1126.5 530.0C1131.9 533.7 1131.0 533.7 1134.7 534.0C1138.4 534.3 1136.6 532.0 1137.5 531.0" fill="none" stroke="#9bbb59" stroke-width="1.600" stroke-linejoin="round"/>
<path d="M917.1 508.6C918.1 506.4 918.0 506.7 920.0 502.0C922.0 497.3 920.1 499.7 923.2 494.4C926.3 489.1 925.2 493.0 929.3 486.2C933.4 479.4 931.3 480.8 935.4 474.0C939.5 467.2 937.4 470.0 941.5 465.9C945.6 461.8 942.2 463.8 947.6 461.8C953.0 459.8 952.4 462.1 957.8 459.8C963.2 457.5 959.2 459.0 963.9 454.9C968.6 450.8 966.6 449.6 972.0 447.6C977.4 445.6 974.0 448.4 980.1 448.8C986.2 449.2 982.2 447.6 990.3 448.8C998.4 450.0 996.4 452.2 1004.5 452.5C1012.6 452.8 1008.6 450.4 1014.7 449.6C1020.8 448.8 1018.5 450.7 1022.8 450.0C1027.1 449.3 1025.0 446.6 1027.7 447.6C1030.4 448.6 1028.6 449.3 1031.0 453.0C1033.4 456.7 1031.6 457.4 1035.0 458.6C1038.4 459.8 1035.0 456.4 1041.1 456.5C1047.2 456.6 1045.8 457.9 1053.3 459.0C1060.8 460.1 1057.4 460.2 1063.5 459.8C1069.6 459.4 1066.2 459.6 1071.6 457.8C1077.0 456.0 1073.7 454.8 1079.8 454.5C1085.9 454.2 1083.8 455.6 1089.9 457.0C1096.0 458.4 1092.7 458.1 1098.1 458.6C1103.5 459.1 1100.8 457.1 1106.2 458.6C1111.6 460.1 1109.6 460.6 1114.3 463.0C1119.0 465.4 1117.2 463.6 1120.4 465.9C1123.6 468.2 1121.3 466.3 1124.0 470.0C1126.7 473.7 1125.0 473.5 1128.6 476.9C1132.2 480.3 1131.3 478.7 1134.7 480.1C1138.1 481.5 1137.4 480.7 1138.7 481.0" fill="none" stroke="#4bacc6" stroke-width="4.200" stroke-linejoin="round" stroke-linecap="round"/>
<polyline points="908.3,305.8 909.2,318.6 910.0,328.0 909.8,416.0 910.2,432.0 911.0,445.0 911.5,459.0 912.5,481.0 913.5,492.0 915.0,503.0 917.1,508.6" fill="none" stroke="#4bacc6" stroke-width="1.200" stroke-opacity="0.500"/>
<g fill="#4bacc6"><circle cx="908.3" cy="305.8" r="2"/><circle cx="909.2" cy="318.6" r="2"/><circle cx="910" cy="328" r="2"/><circle cx="909.8" cy="416" r="2"/><circle cx="910.2" cy="432" r="2"/><circle cx="911" cy="445" r="2"/><circle cx="911.5" cy="459" r="2"/><circle cx="912.5" cy="481" r="2"/><circle cx="913.5" cy="492" r="2"/><circle cx="915" cy="503" r="2"/><circle cx="917.1" cy="508.6" r="2"/></g>
<rect x="890.800" y="611.700" width="284.700" height="4.200" fill="url(#gSpec)"/>
<rect x="1162.500" y="123.500" width="90" height="68" fill="#fff" stroke="#bdbdbd"/>
<path d="M1165 132.700h18.500" stroke="#4f81bd" stroke-width="1"/>
<path d="M1165 149h18.500" stroke="#c0504d" stroke-width="1"/>
<path d="M1165 165.300h18.500" stroke="#9bbb59" stroke-width="1"/>
<circle cx="1174.500" cy="181.500" r="6.200" fill="#4bacc6"/>
<g font-size="10.600" fill="#2e2e36" lengthAdjust="spacingAndGlyphs"><text x="1186.600" y="136.900" textLength="38.400" lengthAdjust="spacingAndGlyphs">X=0,Y=0</text><text x="1186.600" y="153.100" textLength="59.700" lengthAdjust="spacingAndGlyphs">X=347,Y=480</text><text x="1186.600" y="169.300" textLength="60" lengthAdjust="spacingAndGlyphs">X=430,Y=454</text><text x="1186.600" y="185.400" textLength="54.200" lengthAdjust="spacingAndGlyphs">X=86,Y=463</text></g>
</svg>

<div class="abs" id="edgeL"></div>
</body>
</html>
